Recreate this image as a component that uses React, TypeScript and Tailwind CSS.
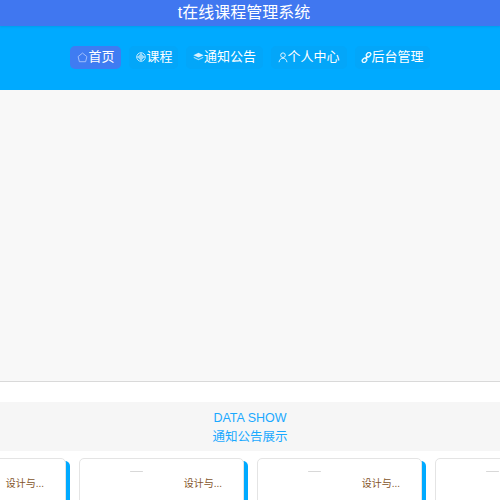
import React from "react";

const font = { fontFamily: '"Liberation Sans", "Noto Sans CJK SC", sans-serif' };

function Home() {
  return (
    <svg width="11" height="11" viewBox="0 0 12 12" fill="none" stroke="#a9c4fb" strokeWidth="1">
      <path d="M6 1.200 10.800 5l-1.400 5.600H2.600L1.200 5z" />
    </svg>
  );
}
function Globe() {
  return (
    <svg width="10" height="10" viewBox="0 0 10 10" fill="none" stroke="#d5f0ff" strokeWidth="0.900">
      <circle cx="5" cy="5" r="4.300" />
      <circle cx="5" cy="5" r="2.200" />
      <path d="M.8 5h8.400M5 .8v8.400" />
    </svg>
  );
}
function Cap() {
  return (
    <svg width="11" height="10" viewBox="0 0 11 10" fill="#d5f0ff">
      <path d="M5.500 .8 10.600 3.300 5.500 5.600.4 3.300z" />
      <path d="M1.200 5 5.500 7l4.300-2 .8.700-5.100 2.500L.4 5.700z" opacity=".8" />
    </svg>
  );
}
function User() {
  return (
    <svg width="10" height="11" viewBox="0 0 10 11" fill="none" stroke="#e2f5ff" strokeWidth="1">
      <circle cx="5" cy="3.200" r="2.300" />
      <path d="M1 10.200C1.500 7.600 3 6.200 5 6.200s3.500 1.400 4 4" />
    </svg>
  );
}
function LinkIcon() {
  return (
    <svg width="11" height="11" viewBox="0 0 11 11" fill="none" stroke="#f0faff" strokeWidth="1.300">
      <rect x="5" y="0.900" width="5" height="3.600" rx="1.800" transform="rotate(-45 7.500 2.700)" />
      <rect x="1" y="6.500" width="5" height="3.600" rx="1.800" transform="rotate(-45 3.500 8.300)" />
      <path d="M4 7 7 4" />
    </svg>
  );
}

const navItems = [
  { label: "首页", icon: <Home />, box: "px-[7px] bg-[#3f7cf2]" },
  { label: "课程", icon: <Globe />, box: "pl-[7px] pr-[6px] bg-[#03a6f9]" },
  { label: "通知公告", icon: <Cap />, box: "px-[6.500px] bg-[#03a6f9]" },
  { label: "个人中心", icon: <User />, box: "px-[7px] bg-[#03a6f9]" },
  { label: "后台管理", icon: <LinkIcon />, box: "px-[6px] bg-[#03a6f9]" },
];

function Card() {
  return (
    <div className="relative h-[60px] w-[169px] shrink-0 pr-[4px]">
      <div className="absolute top-[3px] right-0 bottom-0 w-[5px] rounded-tr-[5px] bg-[#00aaff]" />
      <div className="relative h-full rounded-[5px] border border-[#e4e4e4] bg-white">
        <div className="mt-[12px] ml-[50px] h-px w-[13px] rounded-full bg-[#d8d8d8]" />
        <div className="mt-[5px] pr-[21px] text-right text-[10px] leading-[14px] text-[#84552a]">设计与...</div>
      </div>
    </div>
  );
}

export default function App() {
  return (
    <div className="flex h-[500px] w-[500px] flex-col overflow-hidden bg-white" style={font}>
      <header className="relative h-[26px] shrink-0 bg-[#4077f0] pr-[12px] text-center text-[16px] leading-[26px] text-white shadow-[0_1px_2px_rgba(0,0,0,0.08)]">
        t在线课程管理系统
      </header>
      <nav className="flex h-[64px] shrink-0 items-center justify-center gap-[8px] bg-[#00aaff] pb-[2px]">
        {navItems.map((item) => (
          <a
            key={item.label}
            className={`flex h-[23px] items-center rounded-[5px] text-[13px] text-white ${item.box}`}
          >
            {item.icon}
            <span>{item.label}</span>
          </a>
        ))}
      </nav>
      <main className="h-[292px] shrink-0 border-b border-[#d9d9d9] bg-[#f8f8f8]" />
      <section className="mt-[20px] flex h-[49px] shrink-0 flex-col items-center justify-center bg-[#f6f6f6] pt-[3px] text-[12.5px] leading-[19px] text-[#1aa9ff]">
        <div>DATA SHOW</div>
        <div>通知公告展示</div>
      </section>
      <div className="mt-[7px] -ml-[99px] flex gap-[9px]">
        <Card />
        <Card />
        <Card />
        <Card />
      </div>
    </div>
  );
}
